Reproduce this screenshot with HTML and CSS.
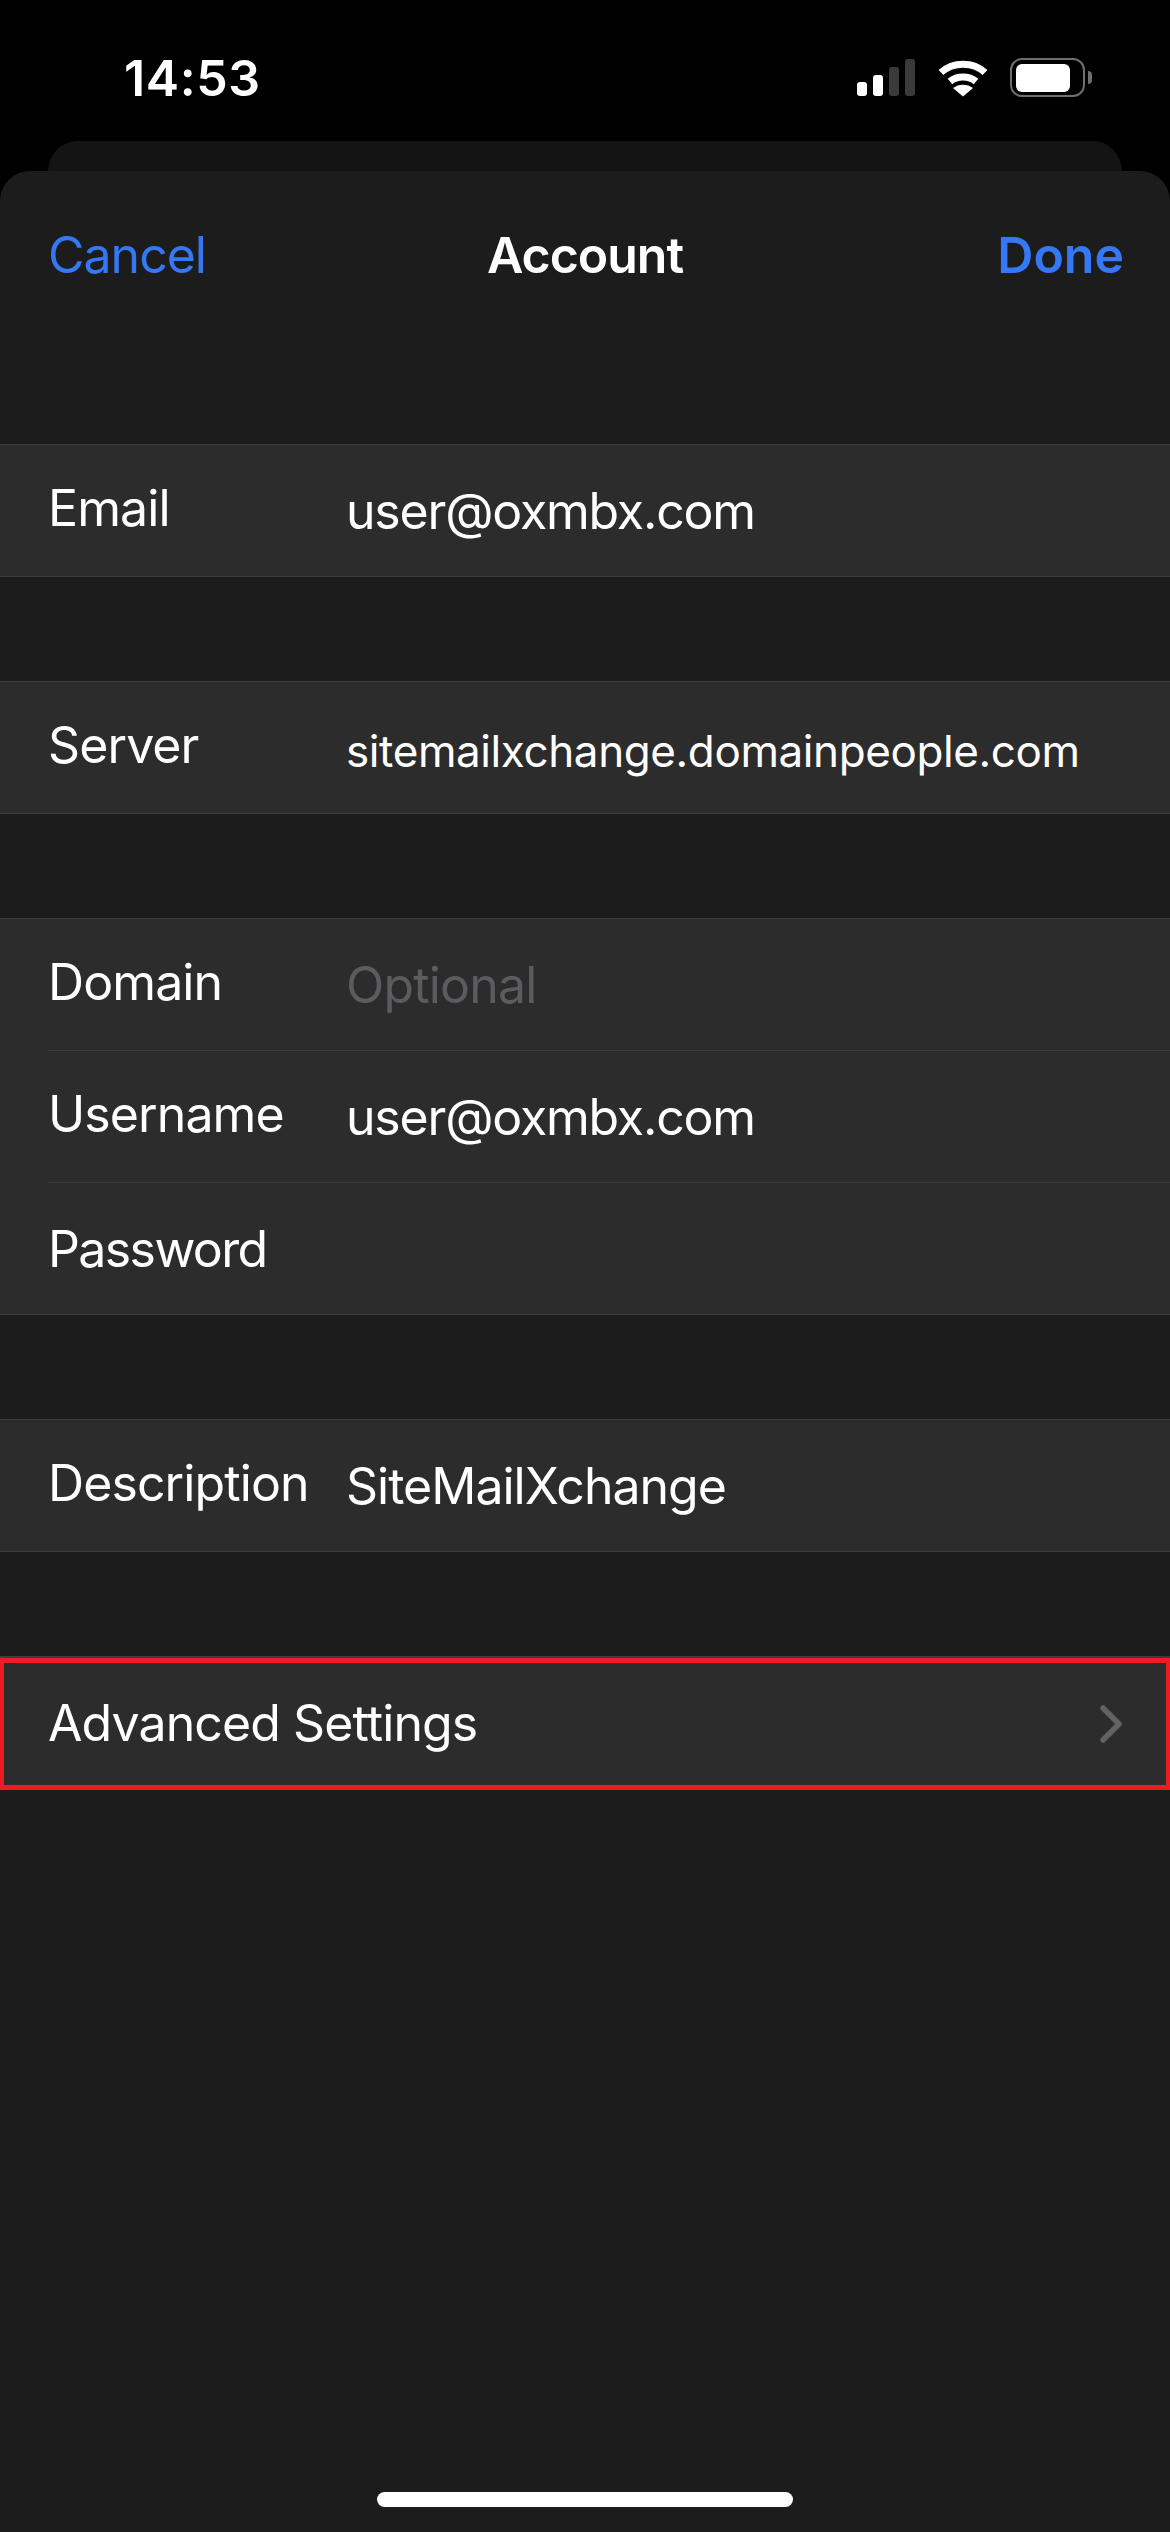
FILE: index.html
```html
<!DOCTYPE html>
<html lang="en">
<head>
<meta charset="UTF-8">
<title>Account</title>
<link rel="stylesheet" href="styles.css">
</head>
<body>

<!-- status bar -->
<div class="status-bar">
    <span class="time">14:53</span>
    <div class="status-icons">
        <div class="signal">
            <span class="bar bar1"></span>
            <span class="bar bar2"></span>
            <span class="bar bar3 off"></span>
            <span class="bar bar4 off"></span>
        </div>
        <svg class="wifi" width="50" height="38" viewBox="0 0 50 38">
            <path d="M3 13.5C15 2.5 35 2.5 47 13.5" fill="none" stroke="#fff" stroke-width="7"/>
            <path d="M12 22.5C19 16.5 31 16.5 38 22.5" fill="none" stroke="#fff" stroke-width="7"/>
            <path d="M25 37.5L15 29C20.500 24.500 29.500 24.500 35 29Z" fill="#fff"/>
        </svg>
        <div class="battery">
            <div class="battery-body"><div class="battery-level"></div></div>
            <div class="battery-nib"></div>
        </div>
    </div>
</div>

<div class="back-card"></div>

<div class="sheet">
    <div class="nav">
        <span class="nav-btn">Cancel</span>
        <span class="nav-title">Account</span>
        <span class="nav-btn done">Done</span>
    </div>

    <div class="group">
        <div class="row"><span class="label">Email</span><span class="value">user@oxmbx.com</span></div>
    </div>

    <div class="group">
        <div class="row"><span class="label">Server</span><span class="value small">sitemailxchange.domainpeople.com</span></div>
    </div>

    <div class="group">
        <div class="row"><span class="label">Domain</span><span class="value placeholder">Optional</span></div>
        <div class="row"><span class="label">Username</span><span class="value">user@oxmbx.com</span></div>
        <div class="row"><span class="label password">Password</span></div>
    </div>

    <div class="group">
        <div class="row"><span class="label">Description</span><span class="value wide">SiteMailXchange</span></div>
    </div>

    <div class="group advanced">
        <div class="row">
            <span class="label">Advanced Settings</span>
            <svg class="chevron" width="22" height="38" viewBox="0 0 22 38">
                <path d="M3 3L19 19L3 35" fill="none" stroke="#636366" stroke-width="5.500" stroke-linecap="round" stroke-linejoin="round"/>
            </svg>
        </div>
    </div>

    <div class="home-indicator"></div>
</div>

</body>
</html>
```

FILE: styles.css
```css
* {
box-sizing: border-box;
}

body {
margin: 0;
width: 1170px;
height: 2532px;
background: #000;
color: #fff;
font-family: Inter, "Liberation Sans", sans-serif;
display: flex;
flex-direction: column;
overflow: hidden;
}

.status-bar {
height: 141px;
flex-shrink: 0;
display: flex;
justify-content: space-between;
align-items: flex-start;
padding: 58px 78px 0 124px;
}

.time {
font-size: 50px;
font-weight: 600;
line-height: 40px;
letter-spacing: 0.6px;
}

.status-icons {
display: flex;
align-items: flex-end;
height: 39px;
}

.signal {
display: flex;
align-items: flex-end;
gap: 6px;
margin-right: 23px;
margin-bottom: 1px;
}

.bar {
width: 10px;
background: #fff;
border-radius: 3px;
}

.bar.off {
background: #3a3a3a;
}

.bar1 { height: 14px; }
.bar2 { height: 21px; }
.bar3 { height: 29px; }
.bar4 { height: 37px; }

.wifi {
margin-right: 22px;
margin-bottom: 0;
}

.battery {
display: flex;
align-items: center;
}

.battery-body {
width: 75px;
height: 39px;
border: 2.500px solid #6f6f6f;
border-radius: 12px;
padding: 3.500px;
}

.battery-level {
width: 54px;
height: 100%;
background: #fff;
border-radius: 6px;
}

.battery-nib {
width: 4px;
height: 13px;
margin-left: 3px;
background: #6f6f6f;
border-radius: 0 4px 4px 0;
}

.back-card {
height: 30px;
flex-shrink: 0;
margin: 0 48px;
background: #141414;
border-radius: 30px 30px 0 0;
}

.sheet {
flex: 1;
display: flex;
flex-direction: column;
background: #1c1c1c;
border-radius: 30px 30px 0 0;
}

.nav {
height: 168px;
margin-bottom: 105px;
padding: 0 46px 0 48px;
display: flex;
justify-content: space-between;
align-items: center;
position: relative;
font-size: 50px;
letter-spacing: -1px;
}

.nav-btn {
color: #3478f6;
}

.nav-btn.done {
font-weight: 600;
letter-spacing: 0;
}

.nav-title {
position: absolute;
left: 0;
right: 0;
text-align: center;
font-weight: 600;
}

.group {
background: #2c2c2c;
border-top: 1px solid #3d3d3d;
border-bottom: 1px solid #3d3d3d;
margin-bottom: 104px;
}

.row {
height: 131px;
padding-left: 48px;
display: flex;
align-items: center;
position: relative;
font-size: 50px;
}

.row + .row::before {
content: "";
position: absolute;
top: -1px;
left: 48px;
right: 0;
height: 1px;
background: #3d3d3d;
}

.row + .row {
margin-top: 1px;
}

.label {
width: 298px;
flex-shrink: 0;
position: relative;
top: -3px;
letter-spacing: -0.9px;
}

.label.password {
top: 0;
letter-spacing: -1.6px;
}

.value {
white-space: nowrap;
letter-spacing: -1.2px;
}

.value.small {
font-size: 44px;
letter-spacing: -0.4px;
position: relative;
top: 3px;
}

.value.wide {
letter-spacing: -1px;
}

.value.placeholder {
color: #5c5c60;
letter-spacing: -0.8px;
}

.advanced {
border-top-width: 2px;
border-bottom: none;
flex-shrink: 0;
}

.advanced .row {
height: 132px;
border: solid #ed1c24;
border-width: 5px 4px;
justify-content: space-between;
padding-left: 44px;
padding-right: 44px;
}

.advanced .label {
top: -1px;
width: auto;
}

.home-indicator {
width: 416px;
height: 15px;
margin: auto auto 25px;
background: #fff;
border-radius: 8px;
}
```
